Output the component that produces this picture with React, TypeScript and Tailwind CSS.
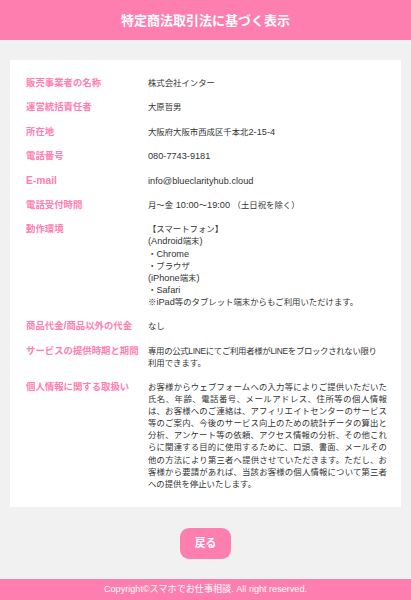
import React from "react";

function Mix({ s, big }: { s: string; big: "value" | "label" }) {
  const parts = s.split(/([A-Za-z0-9@.\-:()/ ]+)/);
  return (
    <>
      {parts.map((p, i) =>
        i % 2 === 1 ? (
          <span key={i} className={big === "value" ? "text-[9.2px]" : "text-[10.3px]"}>
            {p}
          </span>
        ) : (
          <React.Fragment key={i}>{p}</React.Fragment>
        )
      )}
    </>
  );
}

const rows: { label: string; lines: string[] }[] = [
  { label: "販売事業者の名称", lines: ["株式会社インター"] },
  { label: "運営統括責任者", lines: ["大原哲男"] },
  { label: "所在地", lines: ["大阪府大阪市西成区千本北2-15-4"] },
  { label: "電話番号", lines: ["080-7743-9181"] },
  { label: "E-mail", lines: ["info@blueclarityhub.cloud"] },
  { label: "電話受付時間", lines: ["月〜金 10:00〜19:00 （土日祝を除く）"] },
  {
    label: "動作環境",
    lines: [
      "【スマートフォン】",
      "(Android端末)",
      "・Chrome",
      "・ブラウザ",
      "(iPhone端末)",
      "・Safari",
      "※iPad等のタブレット端末からもご利用いただけます。",
    ],
  },
  { label: "商品代金/商品以外の代金", lines: ["なし"] },
  {
    label: "個人情報に関する取扱い",
    lines: [
      "お客様からウェブフォームへの入力等によりご提供いただいた氏名、年齢、電話番号、メールアドレス、住所等の個人情報は、お客様へのご連絡は、アフィリエイトセンターのサービス等のご案内、今後のサービス向上のための統計データの算出と分析、アンケート等の依頼、アクセス情報の分析、その他これらに関連する目的に使用するために、口頭、書面、メールその他の方法により第三者へ提供させていただきます。ただし、お客様から要請があれば、当該お客様の個人情報について第三者への提供を停止いたします。",
    ],
  },
];

function Label({ text }: { text: string }) {
  return (
    <div className="w-[122px] shrink-0 text-[#ff7eb0] font-bold text-[9.4px] leading-[12.2px] whitespace-nowrap">
      <Mix s={text} big="label" />
    </div>
  );
}

export default function App() {
  const before = rows.slice(0, 8);
  const after = rows.slice(8);
  const renderRow = (r: { label: string; lines: string[] }) => (
    <div key={r.label} className="flex">
      <Label text={r.label} />
      <div className="flex-1 text-[#333333] text-[8.4px] leading-[12.1px] text-justify">
        {r.lines.map((l, i) => (
          <div key={i}>
            <Mix s={l} big="value" />
          </div>
        ))}
      </div>
    </div>
  );

  return (
    <div
      className="min-h-[600px] bg-[#f1f1f1] flex flex-col"
      style={{ fontFamily: '"Liberation Sans", "Noto Sans CJK JP", sans-serif' }}
    >
      <header className="h-[40px] bg-[#ff7eb0] flex items-center justify-center">
        <h1 className="text-white font-bold text-[13px] leading-none">特定商法取引法に基づく表示</h1>
      </header>

      <main className="pt-[20px] px-[10px]">
        <div className="bg-white pt-[17px] pb-[17px] pl-[16px] pr-[14px] flex flex-col gap-[12.2px]">
          {before.map(renderRow)}
          <div className="flex">
            <Label text="サービスの提供時期と期間" />
            <div className="flex-1 text-[#333333] text-[8.4px] leading-[12.1px]">
              <div className="whitespace-nowrap tracking-[-0.3px]">
                専用の公式LINEにてご利用者様がLINEをブロックされない限り
              </div>
              <div>利用できます。</div>
            </div>
          </div>
          {after.map(renderRow)}
        </div>
      </main>

      <div className="flex justify-center pt-[21px] pb-[20px]">
        <button className="w-[51px] h-[31px] rounded-[9px] bg-[#ff7eb0] text-white font-bold text-[10.8px]">
          戻る
        </button>
      </div>

      <footer className="h-[23px] bg-[#ff7eb0] flex items-center justify-center">
        <p className="text-white text-[9.1px]">Copyright©スマホでお仕事相談. All right reserved.</p>
      </footer>
    </div>
  );
}
